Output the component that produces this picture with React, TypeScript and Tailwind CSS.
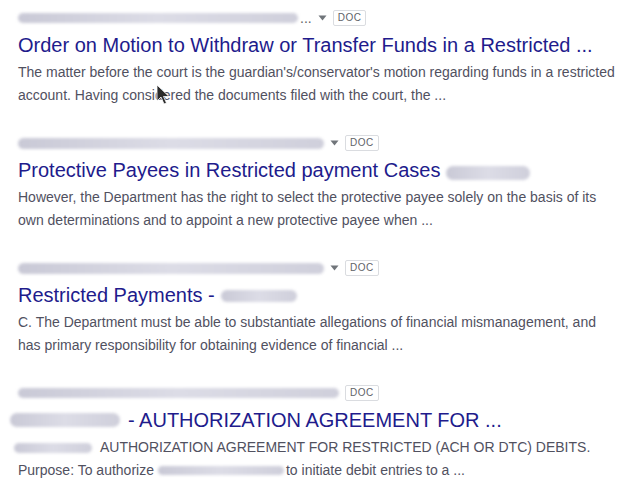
import React from "react";

const Smudge = ({ className }: { className: string }) => (
  <span
    className={`inline-block shrink-0 rounded-full bg-gradient-to-r from-[#c9c9d6] via-[#dcdce6] to-[#cfcfdb] blur-[1.5px] ${className}`}
  />
);

const DocBadge = () => (
  <span className="ml-[6px] flex h-[16px] items-center rounded-[2px] border border-[#dadce0] px-[4px] text-[10px] leading-none tracking-[0.5px] text-[#5f6368]">
    DOC
  </span>
);

const Caret = () => (
  <svg width="9" height="6" viewBox="0 0 9 6" className="ml-[6px] shrink-0">
    <path d="M0.5 0.5h8L4.5 5.5z" fill="#70757a" />
  </svg>
);

const UrlRow = ({ children }: { children: React.ReactNode }) => (
  <div className="flex h-[20px] items-center">{children}</div>
);

const Title = ({ children }: { children: React.ReactNode }) => (
  <div className="mt-[4px] flex h-[26px] items-center whitespace-nowrap text-[20px] leading-[26px] text-[#211b8c]">
    {children}
  </div>
);

const Snippet = ({ children }: { children: React.ReactNode }) => (
  <div className="mt-[3px] text-[14px] leading-[23px] text-[#51515f]">{children}</div>
);

export default function App() {
  return (
    <div
      className="relative h-[493px] w-[631px] overflow-hidden bg-white pl-[18px] pt-[8px]"
      style={{ fontFamily: '"Liberation Sans", Arial, sans-serif' }}
    >
      <div className="flex flex-col gap-[26px]">
        <div>
          <UrlRow>
            <Smudge className="h-[10px] w-[280px]" />
            <span className="ml-[2px] text-[14px] text-[#5f6368]">...</span>
            <Caret />
            <DocBadge />
          </UrlRow>
          <Title>Order on Motion to Withdraw or Transfer Funds in a Restricted ...</Title>
          <Snippet>
            The matter before the court is the guardian's/conservator's motion regarding funds in a restricted
            <br />
            account. Having considered the documents filed with the court, the ...
          </Snippet>
        </div>

        <div>
          <UrlRow>
            <Smudge className="h-[11px] w-[306px]" />
            <Caret />
            <DocBadge />
          </UrlRow>
          <Title>
            Protective Payees in Restricted payment Cases
            <Smudge className="ml-[6px] h-[14px] w-[84px] translate-y-[3px]" />
          </Title>
          <Snippet>
            However, the Department has the right to select the protective payee solely on the basis of its
            <br />
            own determinations and to appoint a new protective payee when ...
          </Snippet>
        </div>

        <div>
          <UrlRow>
            <Smudge className="h-[11px] w-[306px]" />
            <Caret />
            <DocBadge />
          </UrlRow>
          <Title>
            Restricted Payments -
            <Smudge className="ml-[6px] h-[12px] w-[76px] translate-y-[1px]" />
          </Title>
          <Snippet>
            C. The Department must be able to substantiate allegations of financial mismanagement, and
            <br />
            has primary responsibility for obtaining evidence of financial ...
          </Snippet>
        </div>

        <div>
          <UrlRow>
            <Smudge className="h-[10px] w-[321px]" />
            <DocBadge />
          </UrlRow>
          <Title>
            <Smudge className="-ml-[8px] mr-[8px] h-[14px] w-[110px]" />- AUTHORIZATION AGREEMENT FOR ...
          </Title>
          <Snippet>
            <span className="flex items-center">
              <Smudge className="-ml-[4px] mr-[8px] h-[10px] w-[78px]" />
              AUTHORIZATION AGREEMENT FOR RESTRICTED (ACH OR DTC) DEBITS.
            </span>
            <span className="flex items-center">
              Purpose: To authorize
              <Smudge className="ml-[4px] mr-[2px] h-[9px] w-[126px]" />
              to initiate debit entries to a ...
            </span>
          </Snippet>
        </div>
      </div>

      <svg
        className="absolute left-[156px] top-[84px]"
        width="13"
        height="21"
        viewBox="0 0 13 21"
      >
        <path d="M1 1v16l4-4 3 7 2.5-1-3-6.5h5.5z" fill="#2b2b2b" stroke="#ffffff" strokeWidth="0.8" />
      </svg>
    </div>
  );
}
